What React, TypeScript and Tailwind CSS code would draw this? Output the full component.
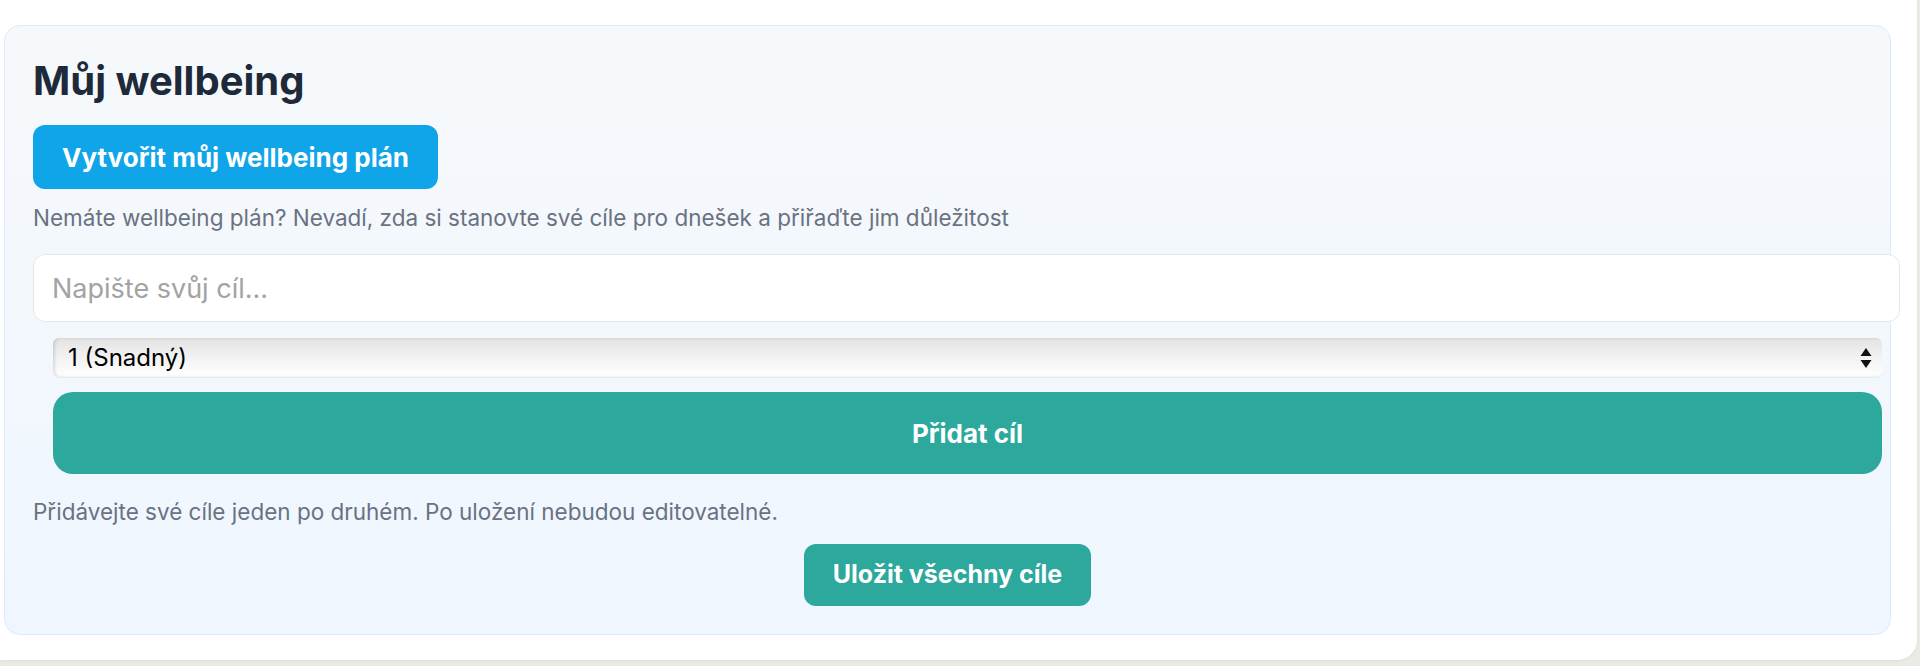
import React from "react";

const font = { fontFamily: "Inter, 'Noto Sans', sans-serif" };

const SelectArrows = () => (
  <svg width="12" height="22" viewBox="0 0 12 22" className="pointer-events-none absolute right-[10px] top-1/2 -translate-y-1/2">
    <path d="M6 1 L11.5 9 L0.5 9 Z" fill="#111" />
    <path d="M6 21 L11.5 13 L0.5 13 Z" fill="#111" />
  </svg>
);

const WellbeingCard = () => {
  return (
    <div className="rounded-2xl border border-blue-100 bg-gradient-to-b from-[#f6f9fb] to-[#eff6ff] p-[28px]">
      <h2 className="mt-[3px] text-[40px] font-bold leading-[48px] text-gray-800">Můj wellbeing</h2>

      <button className="mt-[20px] flex h-[64px] items-center rounded-xl bg-[#10a4e8] px-[29px] text-[26px] font-bold text-white">
        Vytvořit můj wellbeing plán
      </button>

      <p className="mt-[15px] text-[22.5px] leading-[28px] text-gray-500">
        Nemáte wellbeing plán? Nevadí, zda si stanovte své cíle pro dnešek a přiřaďte jim důležitost
      </p>

      <input
        type="text"
        placeholder="Napište svůj cíl..."
        className="mt-[22px] box-content block h-[66px] w-full rounded-xl border border-gray-200 bg-white px-[18px] text-[27px] outline-none placeholder:text-[#a3a3a3]"
      />

      <div className="ml-[20px] flex w-full flex-col gap-[15px] pt-[16px]">
        <div className="relative">
          <select className="h-[39px] w-full appearance-none rounded-md bg-gradient-to-b from-[#e3e3e3] via-[#f2f2f2] to-white pl-[15px] text-[24px] text-black shadow-[inset_2px_0_3px_rgba(0,0,0,0.12),0_1px_0_rgba(0,0,0,0.05)] outline-none">
            <option>1 (Snadný)</option>
            <option>2 (Střední)</option>
            <option>3 (Těžký)</option>
          </select>
          <SelectArrows />
        </div>
        <button className="h-[82px] w-full rounded-[20px] bg-[#2ca89c] text-[26px] font-bold text-white">
          Přidat cíl
        </button>
      </div>

      <p className="mt-[24px] text-[22.5px] leading-[28px] text-gray-500">
        Přidávejte své cíle jeden po druhém. Po uložení nebudou editovatelné.
      </p>

      <div className="mt-[18px] flex justify-center">
        <button className="h-[62px] rounded-xl bg-[#2ca89c] px-[29px] text-[25px] font-bold text-white">
          Uložit všechny cíle
        </button>
      </div>
    </div>
  );
};

export default function App() {
  return (
    <div className="h-[666px] overflow-hidden bg-[#ebebe6]" style={font}>
      <div className="mr-[3px] h-[660px] rounded-br-[20px] bg-white pl-[4px] pr-[26px] pt-[25px] shadow-[0_1px_3px_rgba(0,0,0,0.06)]">
        <WellbeingCard />
      </div>
    </div>
  );
}
